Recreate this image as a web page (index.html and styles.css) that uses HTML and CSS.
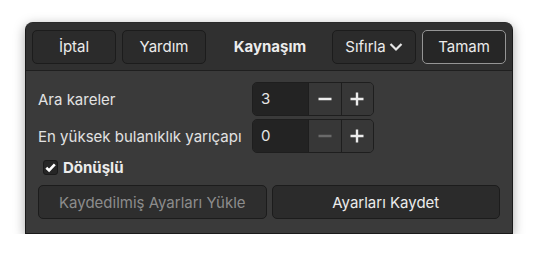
FILE: index.html
```html
<!DOCTYPE html>
<html lang="tr">
<head>
    <meta charset="UTF-8">
    <title>Kaynaşım</title>
    <link rel="stylesheet" href="styles.css">
</head>
<body>
    <div class="window">
        <div class="headerbar">
            <button class="btn">İptal</button>
            <button class="btn">Yardım</button>
            <div class="title">Kaynaşım</div>
            <button class="btn menu">Sıfırla
                <svg width="14" height="10" viewBox="0 0 14 10"><path d="M1.5 2 L7 7.5 L12.5 2" fill="none" stroke="#e6e6e6" stroke-width="2.2"/></svg>
            </button>
            <button class="btn default">Tamam</button>
        </div>

        <div class="content">
            <div class="grid">
                <label>Ara kareler</label>
                <div class="spin">
                    <div class="entry">3</div>
                    <button class="step">
                        <svg width="16" height="16" viewBox="0 0 16 16"><path d="M1.5 8 H14.5" stroke="#ececec" stroke-width="2.4"/></svg>
                    </button>
                    <button class="step">
                        <svg width="16" height="16" viewBox="0 0 16 16"><path d="M1.5 8 H14.5 M8 1.5 V14.5" stroke="#ececec" stroke-width="2.4"/></svg>
                    </button>
                </div>

                <label>En yüksek bulanıklık yarıçapı</label>
                <div class="spin">
                    <div class="entry">0</div>
                    <button class="step">
                        <svg width="16" height="16" viewBox="0 0 16 16"><path d="M1.5 8 H14.5" stroke="#6a6a6a" stroke-width="2.4"/></svg>
                    </button>
                    <button class="step">
                        <svg width="16" height="16" viewBox="0 0 16 16"><path d="M1.5 8 H14.5 M8 1.5 V14.5" stroke="#ececec" stroke-width="2.4"/></svg>
                    </button>
                </div>
            </div>

            <div class="check">
                <span class="box">
                    <svg width="13" height="13" viewBox="0 0 13 13"><path d="M2.3 6.8 L5.1 9.5 L10.8 3.4" fill="none" stroke="#ffffff" stroke-width="2.6"/></svg>
                </span>
                <span class="check-label">Dönüşlü</span>
            </div>

            <div class="actions">
                <button class="btn wide disabled">Kaydedilmiş Ayarları Yükle</button>
                <button class="btn wide">Ayarları Kaydet</button>
            </div>
        </div>
    </div>
</body>
</html>
```

FILE: styles.css
```css
body {
    margin: 0;
    background: #ffffff;
    font-family: Inter, "Noto Sans", sans-serif;
    font-size: 15px;
    color: #e8e8e8;
}

.window {
    margin: 22px 0 0 25px;
    width: 488px;
    height: 212px;
    box-sizing: border-box;
    background: #3a3a3a;
    border: 1px solid #1a1a1a;
    border-top-color: #2a2a2a;
    border-radius: 8px 8px 0 0;
    box-shadow: 0 3px 12px rgba(0, 0, 0, 0.35);
    overflow: hidden;
}

.headerbar {
    display: flex;
    align-items: center;
    gap: 6px;
    height: 47px;
    padding: 0 6px;
    background: #303030;
    border-bottom: 1px solid #1f1f1f;
}

.btn {
    height: 34px;
    width: 84px;
    padding: 0;
    background: #2b2b2b;
    border: 1px solid #1c1c1c;
    border-radius: 5px;
    color: #ebebeb;
    font-family: inherit;
    font-size: 15px;
}

.btn.menu {
    display: flex;
    align-items: center;
    justify-content: center;
    gap: 3px;
}

.btn.default {
    border-color: #959595;
    background: #262626;
}

.title {
    flex: 1;
    text-align: center;
    font-weight: bold;
    color: #ececec;
    padding-left: 2px;
}

.content {
    padding: 11px 12px 0 12px;
}

.grid {
    display: grid;
    grid-template-columns: 202px auto 1fr;
    column-gap: 12px;
    row-gap: 3px;
    align-items: center;
}

.grid label {
    grid-column: 1;
    color: #e2e2e2;
    white-space: nowrap;
}

.spin {
    grid-column: 2;
    display: flex;
    height: 34px;
    width: 122px;
    box-sizing: border-box;
    border: 1px solid #1e1e1e;
    border-radius: 5px;
    overflow: hidden;
    background: #363636;
}

.entry {
    width: 51px;
    background: #232323;
    padding-left: 8px;
    line-height: 32px;
    color: #e6e6e6;
}

.step {
    width: 35px;
    padding: 0;
    border: none;
    border-left: 1px solid #1e1e1e;
    background: #373737;
    display: flex;
    align-items: center;
    justify-content: center;
}

.check {
    display: flex;
    align-items: center;
    gap: 5px;
    margin: 7px 0 0 5px;
    height: 15px;
}

.box {
    display: flex;
    align-items: center;
    justify-content: center;
    width: 15px;
    height: 15px;
    border-radius: 3px;
    background: #262626;
    border: 1px solid #1a1a1a;
    box-sizing: border-box;
}

.check-label {
    font-weight: bold;
    color: #ececec;
}

.actions {
    display: flex;
    gap: 5px;
    margin-top: 10px;
}

.btn.wide {
    flex: 1;
    width: auto;
}

.btn.disabled {
    color: #8c8c8c;
    background: #2e2e2e;
}
```
